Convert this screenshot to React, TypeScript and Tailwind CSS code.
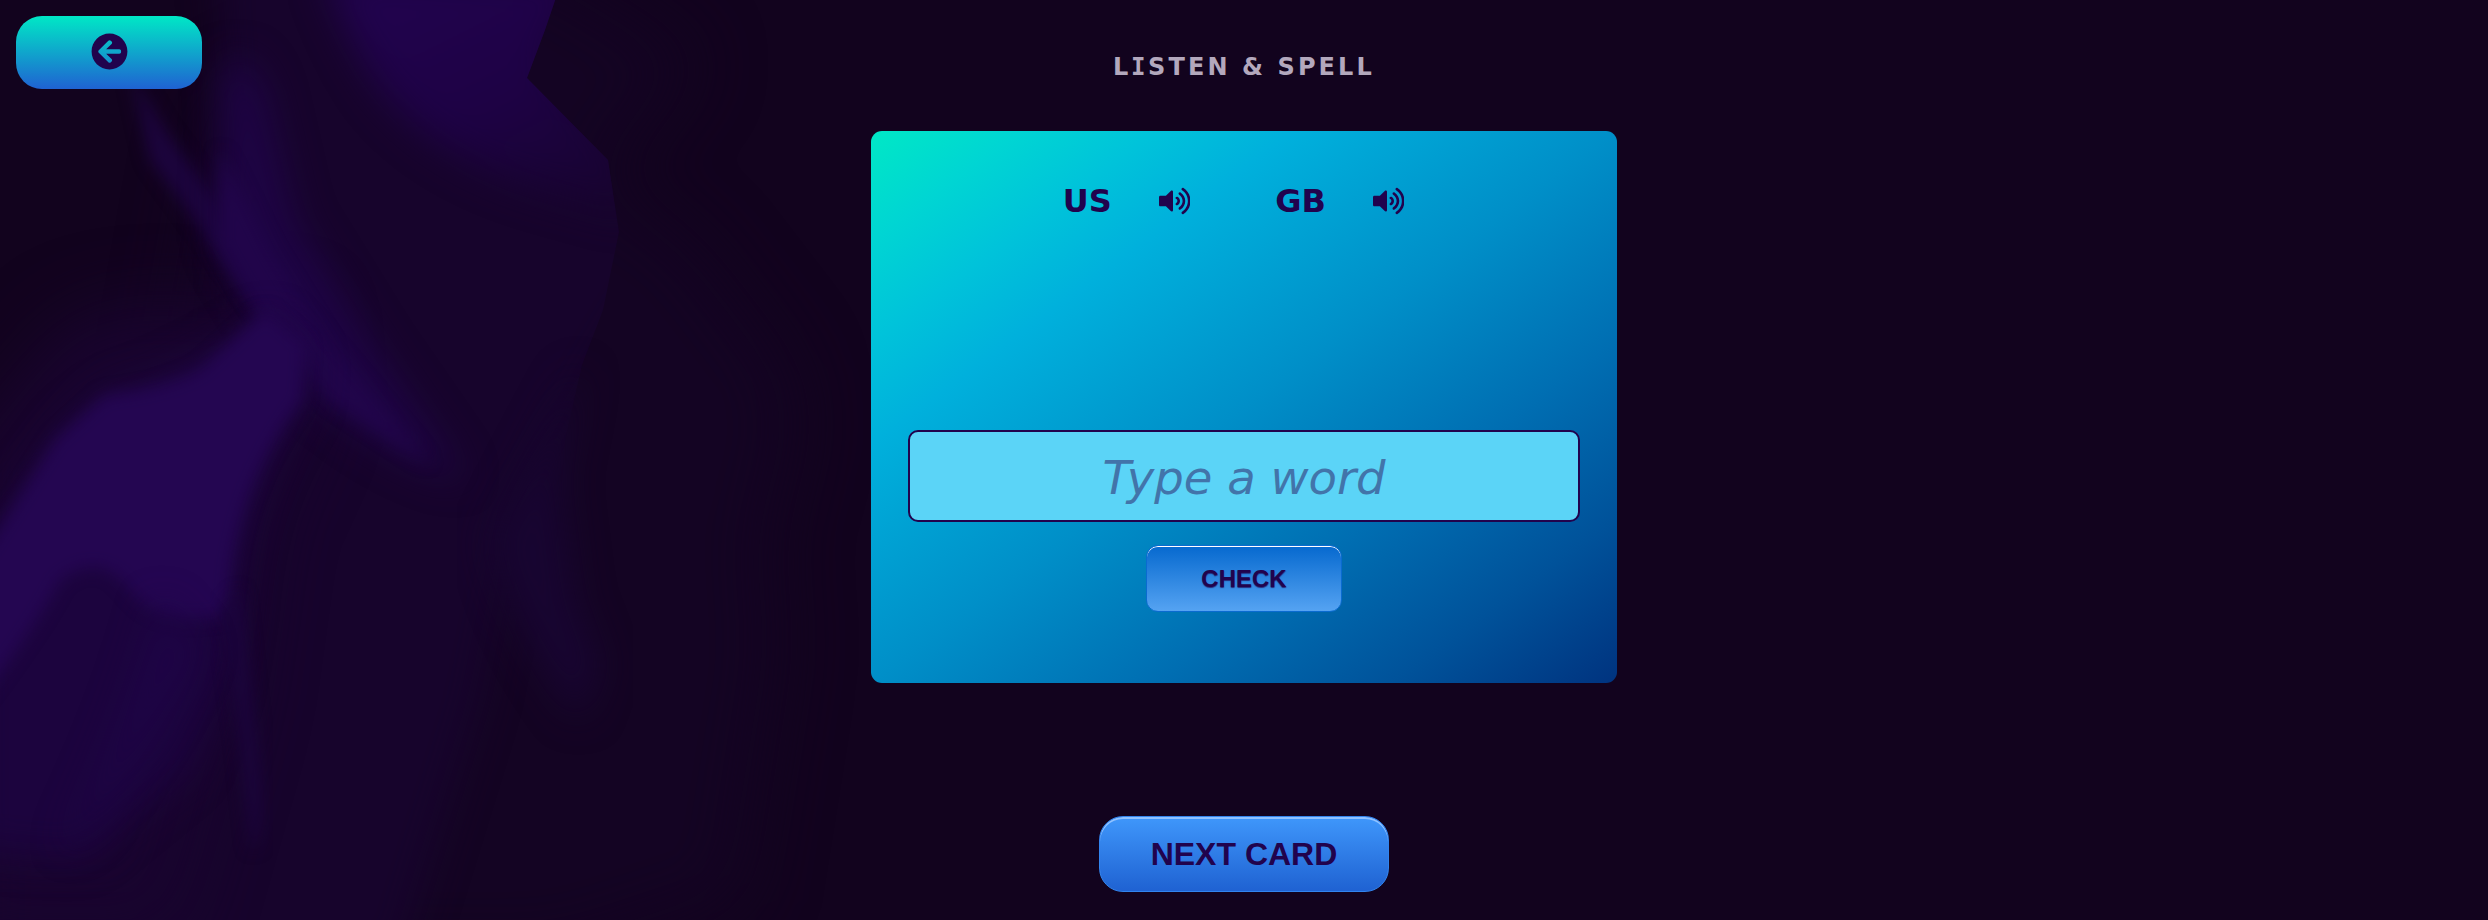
import { FaArrowCircleLeft, FaVolumeUp } from "react-icons/fa";

function Backdrop() {
  return (
    <svg className="absolute inset-0 h-full w-full" viewBox="0 0 2488 920" colorInterpolationFilters="sRGB" aria-hidden="true">
      <defs>
        <filter id="s" x="-30%" y="-30%" width="160%" height="160%"><feGaussianBlur stdDeviation="8" /></filter>
        <filter id="m" x="-30%" y="-30%" width="160%" height="160%"><feGaussianBlur stdDeviation="18" /></filter>
        <filter id="l" x="-30%" y="-30%" width="160%" height="160%"><feGaussianBlur stdDeviation="34" /></filter>
        <linearGradient id="fold" x1="400" y1="0" x2="530" y2="260" gradientUnits="userSpaceOnUse">
          <stop offset="0" stopColor="#21034d" />
          <stop offset="0.45" stopColor="#1e0245" />
          <stop offset="1" stopColor="#17042d" />
        </linearGradient>
        <clipPath id="edge">
          <path d="M-20 -20H562L545 30L527 78L608 160L614 200L619 232L603 310L582 365L565 440L560 500L578 590L606 665L580 740L480 930H-20V-20Z" />
        </clipPath>
      </defs>
      <path d="M520 -50L700 60L600 180L690 240L790 370L800 430L770 540L780 650L740 900L560 960H200L150 500L220 100Z" fill="#140423" filter="url(#l)" />
      <g clipPath="url(#edge)">
        <path d="M215 -40H640L670 250L620 330L520 500L480 700L400 960H-60V600L240 330Z" fill="#17042c" filter="url(#m)" />
        <path d="M323 -30H590L550 60L640 180L630 215L540 190Q440 160 385 95Q350 50 323 -30Z" fill="url(#fold)" filter="url(#m)" />
      </g>
      <path d="M60 330Q120 290 220 310L300 310L310 410L260 520L235 700L170 930H-40V450Z" fill="#19042f" filter="url(#l)" />
      <path d="M130 70L165 130L220 205L270 315L250 300L205 235L150 160Z" fill="#1c043d" filter="url(#s)" />
      <path d="M222 70Q240 40 265 90L295 220L375 350L465 480Q390 460 320 400Q260 315 219 240Z" fill="#1e0444" filter="url(#m)" />
      <path d="M220 150L270 250L325 340L430 465L330 400L262 318L220 245Z" fill="#21054a" filter="url(#s)" />
      <path d="M110 395Q180 375 270 318L310 360L305 405Q245 480 236 620L224 690L190 770L80 860L-30 850V560L70 425Z" fill="#1c043e" filter="url(#m)" />
      <path d="M105 395Q160 390 200 370L265 310L306 345L302 400Q247 470 232 560L226 615Q160 630 130 590Q100 550 60 580Q40 620 -20 700V560L55 440Z" fill="#240651" filter="url(#s)" />
      <path d="M222 610L240 740L252 850Q268 840 256 740L240 590Z" fill="#1b043c" filter="url(#s)" />
      <path d="M582 365L560 480L575 600L600 665L580 720Q510 630 490 540Q520 480 582 365Z" fill="#180531" filter="url(#m)" />
      <path d="M160 600Q130 720 65 850Q90 840 200 650Z" fill="#1e0446" filter="url(#m)" />
    </svg>
  );
}

function Accent({ label }: { label: string }) {
  return (
    <div className="flex items-center">
      <span>{label}</span>
      <button aria-label={`Play ${label} pronunciation`} className="ml-[47px]">
        <FaVolumeUp className="h-7 w-[31.5px]" />
      </button>
    </div>
  );
}

export default function App() {
  return (
    <main className="relative h-[920px] overflow-hidden bg-[#12031e] font-['DejaVu_Sans',sans-serif] text-[#21034d]">
      <Backdrop />
      <button aria-label="Back" className="absolute left-4 top-4 flex h-[73px] w-[186px] items-center justify-center rounded-[26px] bg-linear-to-b/srgb from-[#00e8c6] to-[#1f62d2] pb-[3px]">
        <FaArrowCircleLeft className="size-[37px]" />
      </button>
      <div className="relative flex flex-col items-center pt-[51px]">
        <h1 className="h-[80px] text-2xl leading-8 font-bold tracking-[3.1px] text-[#b3a8bd]">
          L<span className="-mx-[0.5px] font-['DejaVu_Sans_Mono',monospace]">I</span>STEN &amp; SPELL
        </h1>
        <section className="flex h-[552px] w-[746px] flex-col items-center rounded-[11px] bg-[linear-gradient(to_bottom_right,#00e8c6,#00d5d3_10%,#00c3da_19%,#00b0dc_28.5%,#008fc8_50%,#006eb2_69%,#00529a_85%,#00337f)] px-[37px] pt-[47px]">
          <div className="flex h-[46px] gap-[85px] pr-[21px] text-[32px] font-bold">
            <Accent label="US" />
            <Accent label="GB" />
          </div>
          <input placeholder="Type a word" className="mt-[206px] h-[92px] w-full rounded-[10px] border-2 border-[#21034d] bg-[#5bd4f7] pt-[3px] text-center text-[46.5px] placeholder:italic placeholder:text-[#4274aa]" />
          <button className="mt-[23px] h-[67px] w-[196px] rounded-[12px] border border-[#0a6bd0] bg-linear-to-b/srgb from-[#0669cf] to-[#55a3f2] font-['Liberation_Sans',sans-serif] text-2xl font-bold shadow-[inset_0_1px_0_#fff] [text-shadow:0_1px_1px_#21034db3]">CHECK</button>
        </section>
        <button className="mt-[133px] h-[76px] w-[290px] rounded-[24px] border border-[#3284ed] bg-linear-to-b/srgb from-[#3f97fb] to-[#1f62d2] font-['Liberation_Sans',sans-serif] text-[32px] font-bold shadow-[inset_0_2px_0_#8fc2ff]">NEXT CARD</button>
      </div>
    </main>
  );
}
